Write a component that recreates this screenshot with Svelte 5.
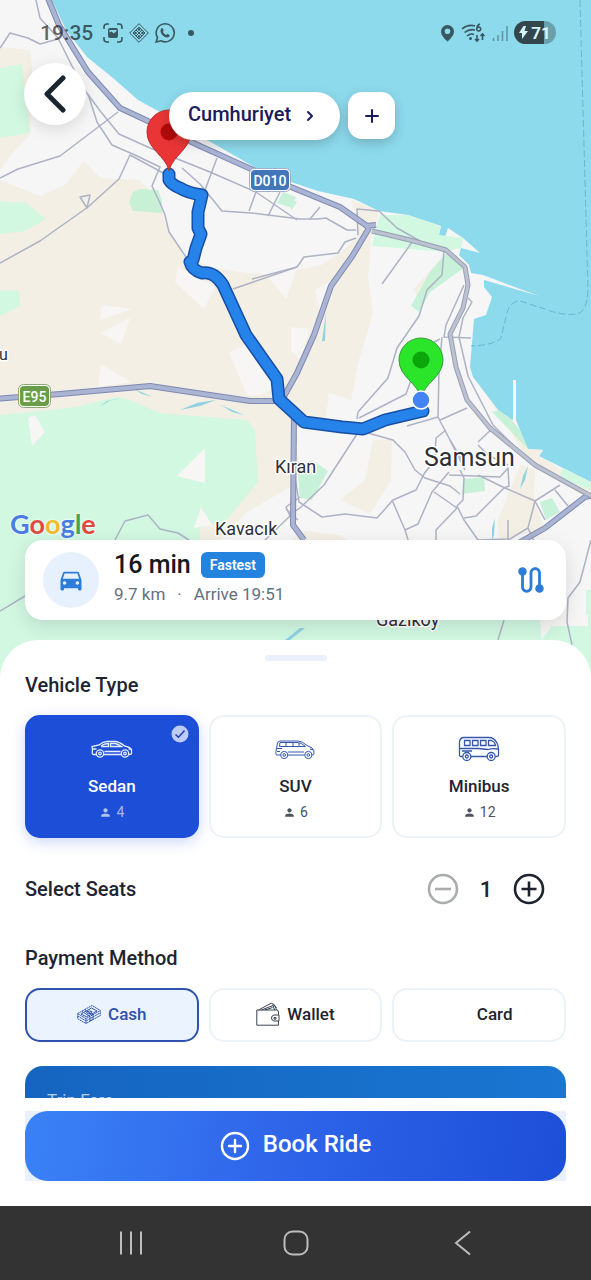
<script>
  const vehicles = [
    { id: 'sedan', name: 'Sedan', seats: 4 },
    { id: 'suv', name: 'SUV', seats: 6 },
    { id: 'minibus', name: 'Minibus', seats: 12 }
  ];
  const payments = [
    { id: 'cash', name: 'Cash' },
    { id: 'wallet', name: 'Wallet' },
    { id: 'card', name: 'Card' }
  ];

  let vehicle = $state('sedan');
  let payment = $state('cash');
  let seats = $state(1);
  let maxSeats = $derived(vehicles.find((v) => v.id === vehicle).seats);

  const route =
    'M169 174L169 180Q172 185 180 188Q188 193 202 195L198 212V228L201 234L196 248L193 260L190 262Q192 270 202 273Q214 271 223 285L246 335L277 379L279 399L304 422L342 427L363 429L385 420L423 411';

  const highways = [
    'M47 -4L59 25L88 72L120 108L150 122L200 146L291 187L340 207L367 226L376 225',
    'M369 228L353 255L331 286L314 335L297 373L282 400',
    'M-5 399L60 394L150 386L250 401H276',
    'M294 412L293 525L304 540',
    'M515 545L545 528L585 497L595 495'
  ];

  const minorRoads = [
    'M36 0 L40 18 L58 38 L72 66 L86 92 L101 112 L119 134 L150 148 L175 158 L210 172 L256 192 L297 220',
    'M0 48 L10 33 L28 38 L40 44 L58 39',
    'M0 178 L18 169 L60 156 L118 112',
    'M0 263 L40 241 L88 207 L119 179 L130 155 L165 174 L180 183',
    'M80 197 L90 195 L87 208 Z',
    'M88 94 L97 122 L112 145 L135 155 L160 167 L157 174 L152 186 L160 203 L165 215 L169 232 L186 257',
    'M182 168 L200 184 L222 211 L251 213 L300 219 L318 219 L326 218 L347 230 L356 230',
    'M217 158 L205 190',
    'M256 192 L249 211 M280 192 L268 216',
    'M310 219 L320 207 M358 235 L357 209 L379 211 L397 228 L420 241',
    'M356 238 L345 242 L338 253 L304 257 L297 267 L233 289',
    'M297 267 L252 279 M413 241 L382 284',
    'M444 250 L442 275 L427 290 L419 316 L397 348 L388 378 L358 412 L357 419',
    'M464 285 L446 325 L444 337 L471 338',
    'M468 298 L472 302 L463 318 L459 337 L468 376 L493 425 L530 462',
    'M442 337 L439 370 L438 417 L450 440 L465 470',
    'M434 342 L440 339 M438 417 L407 426',
    'M359 418 L406 394 L411 380',
    'M440 420 L467 408',
    'M357 430 L393 440 L405 452 L415 470 L425 478 L450 486 L460 494',
    'M357 434 L324 485 L301 507 L293 513',
    'M296 437 L293 465 L299 502 L322 517 L345 514 L377 518 L393 500 L416 490 L424 474 L430 466',
    'M446 430 L436 438 L435 455 M450 440 L462 460',
    'M392 500 L405 530 L409 543 L405 530 L418 524 L432 492 L449 472',
    'M460 470 L464 478 L463 500 L457 506 L464 520 L478 540 L508 539 L508 520',
    'M434 492 L457 508 L436 530 L436 544',
    'M449 475 L500 477 L508 468 L509 486 L504 488 L476 516 L464 518',
    'M478 442 L493 428 M478 445 L488 455 L508 465 M478 475 L505 488 L535 501 L560 485',
    'M535 501 L528 528 L508 540 M535 501 L545 520 M528 528 L535 543 M555 490 L568 506',
    'M591 540 L580 582 L568 598 L567 622 L572 645',
    'M115 540 L125 521 L148 515 L160 529 L178 533 L192 542',
    'M0 611 L30 593 M504 620 L498 640',
    'M300 497 L286 507 L290 516 L265 540',
    'M444 541 L437 570 M286 509 L298 520'
  ];
</script>

{#snippet person()}
  <svg class="person" viewBox="0 0 24 24" aria-hidden="true">
    <path d="M12 12c2.21 0 4-1.79 4-4s-1.79-4-4-4-4 1.79-4 4 1.79 4 4 4zm0 2c-2.67 0-8 1.34-8 4v2h16v-2c0-2.66-5.33-4-8-4z" />
  </svg>
{/snippet}

{#snippet vehicleIcon(id)}
  <svg class="vehicle-icon" viewBox="0 0 42 28" aria-hidden="true">
    {#if id === 'sedan'}
      <path d="M5 19.500H2.500Q1 19.500 1.300 17.500L1.500 14L1 11.500L8 10Q12 6.500 16 6.500H24Q28 6.500 33.500 11Q39 12 40.500 14.500V18.500Q40.500 19.500 38 19.500M30 19.500H13" />
      <path d="M10 11Q13 8.500 17.500 8.500V11.500H10M19.500 8.500H24Q27 9 30.500 11.500H19.500ZM2 14H5.500M37.500 14H40M13.500 16.500H29.500" />
      <circle cx="9" cy="18.500" r="3.700" /><circle cx="9" cy="18.500" r="1.300" />
      <circle cx="34" cy="18.500" r="3.700" /><circle cx="34" cy="18.500" r="1.300" />
    {:else if id === 'suv'}
      <path d="M6.500 20H2.500Q1.500 19 2 16.500L3.500 8Q4 6.500 6 6H24Q28 6 33 10.500L38 13Q40.500 15 40 19Q39.500 20 38 20M30.500 20H14" />
      <path d="M6 7.500H24.500Q27.500 8 31.500 11.500H5.500ZM12 7.500V11.500M19 7.500V11.500M25 8V11.500M2.500 13.500H8M36 14L39.500 15M3 16.500H6M14 17H30" />
      <circle cx="10.200" cy="20" r="3.600" /><circle cx="10.200" cy="20" r="1.300" />
      <circle cx="34.300" cy="20" r="3.600" /><circle cx="34.300" cy="20" r="1.300" />
    {:else}
      <g stroke-width="1.300">
        <path d="M4.500 21.500H2.500Q1.500 21.500 1.500 20V7Q2 2.500 6 2.500H31Q36 2.500 39 8Q40.500 11 40.500 15V20Q40.500 21.500 38 21.500M29 21.500H13" />
        <path d="M6.500 5.500H12V10.500H6.500ZM14.500 5.500H20V10.500H14.500ZM22.500 5.500H28V10.500H22.500ZM30.500 5.500H33.500Q37 7 37.500 10.500H30.500ZM2 13.500H20L30 14.500Q35 13 40 14M4 16H14" />
        <circle cx="8.800" cy="21.500" r="4" /><circle cx="8.800" cy="21.500" r="1.500" />
        <circle cx="33.200" cy="21.500" r="4" /><circle cx="33.200" cy="21.500" r="1.500" />
      </g>
    {/if}
  </svg>
{/snippet}

{#snippet paymentIcon(id)}
  <svg class="payment-icon" viewBox="0 0 24 24" aria-hidden="true">
    {#if id === 'cash'}
      <path d="M.7 11.500L15 3.500L23.300 8.500L9 16.700ZM.7 11.500V16.700L9 21.500L23.300 13.500V8.500M9 16.700V21.500M1 14L9 19L23 11" stroke-dasharray="2 .5" />
      <path d="M4 12L14.500 6L20 9L9.500 14.800ZM7.500 7.700L16 12.800V17.500L13 19V14.500L5 9.500M9.500 10.500Q12 8 15 9.500Q14.500 12 11 11.800Z" />
    {:else if id === 'wallet'}
      <path d="M.8 8H20.500Q22.500 8 22.500 10V13M22.500 19V23.200H.8V8M22.800 13H18Q15.500 13.500 15.500 16Q15.500 18.500 18 19H23V13M18 15.500H20V17.200H18Z" />
      <path d="M2.500 8L15.500 1L19.500 5L20.500 8M5.500 8L17 3.500L18.500 8M9 8L16.500 5.500M17 1.500L20.500 6" />
    {/if}
  </svg>
{/snippet}

<main class="app">
  <svg class="map" viewBox="0 0 591 690" preserveAspectRatio="xMidYMin slice" role="img" aria-label="Route map from Samsun to Cumhuriyet">
    <rect width="591" height="690" fill="#8ddaed" />
    <path fill="#f6f6f7" d="M0 0H52L66 30L87 57L113 78L138 100L160 112L200 136L230 153L256 168L291 182L318 191L354 199L379 211L408 215L441 226L439 235L445 237L448 228L463 238L480 253L461 248L459 255L469 265L471 273L483 275L539 296L484 280V287L492 297L486 315L474 319L470 367L473 377L498 410L511 419L513 420V380H516V420L520 430L528 449L543 450L539 456L591 482V690H0Z" />
    <g fill="#f4efe4">
      <path d="M0 47L30 50L32 67L30 135L15 150L0 170Z" />
      <path d="M0 180L40 196L66 184L84 161L100 178L140 180L160 205L165 222L183 255L213 268L247 273L273 275L297 270L321 265L341 252L356 238L357 209L371 212V243L368 278L373 313L359 360L351 400L329 393L326 417L295 430L300 470L290 487L247 512L215 545H0Z" />
      <path d="M352 200L379 211L373 235L359 232ZM373 440L392 439L391 480L370 514L340 500L365 480ZM291 540L305 531L340 535L355 545H291ZM528 449L543 450L539 456L591 488V500L555 480L530 463L500 415L475 380ZM520 465L535 470L534 500L545 530L520 535L500 540L497 522ZM413 290L435 265L444 258V270L420 298Z" />
    </g>
    <path fill="#d2f8e2" d="M0 415L50 410L75 407L117 397L130 400L160 413L247 420L255 430L258 482L227 520L200 528V600H540V625H591V690H0ZM0 203L25 202L46 219L25 231L0 234ZM0 290L19 291L20 306L0 316ZM0 68L22 64L30 133L0 138ZM0 201L20 203L42 218L0 231ZM380 215L408 215L441 226L439 235L463 238L461 248L445 252L372 246L375 233ZM562 468L591 482V490L560 478ZM586 590H591V640H586Z" />
    <path fill="#bdf0d1" d="M133 192L140 189L158 190L162 200V213L133 211L129 203ZM283 192L296 197L292 208L277 203ZM291 198L297 202L291 211ZM411 306L430 272L446 253L464 268L430 292L419 312ZM463 479L484 477L485 491L462 494ZM540 502L552 498L560 512L546 520ZM297 465L312 460L328 471L312 500L300 498ZM492 412L498 410L511 419L520 430L528 449Z" opacity=".8" />
    <g fill="#f7f6f5">
      <path d="M102 305L132 309L100 320ZM130 318L121 344L100 333ZM101 364L131 382L110 385L98 387ZM178 267L215 287L204 309L175 282ZM267 276L297 268L286 299ZM229 353L246 344L280 385L260 395H247ZM205 448L177 476L205 483ZM35 415L45 432L32 446L28 418ZM201 507L212 525L194 528ZM291 327L310 329L300 360L291 350ZM315 290L332 280V300L320 312ZM325 448L350 440L369 470L335 473L315 455Z" />
      <path d="M541 615H588V626H552L541 640Z" />
    </g>
    <path fill="#8fd3e2" d="M122 398L109 401L99 407L107 401ZM134 389L153 397L142 394ZM180 410L197 403L216 400L200 406ZM221 405L244 415L232 412ZM326 313L325 341L322 341ZM528 466L525 480L520 489L523 476ZM495 518L494 535L492 540L492 528ZM285 640L300 628L305 628L290 640Z" />
    <path fill="none" stroke="#66b7d0" stroke-width="1" stroke-dasharray="7 3" d="M580 0L588 290Q587 312 577 314Q562 316 545 309L520 301Q509 301 506 317L501 338Q495 345 471 346" />

    <g fill="none" stroke="#adb3c5" stroke-width="1.500" stroke-linejoin="round">
      {#each minorRoads as d}
        <path {d} />
      {/each}
    </g>

    <g fill="none" stroke-linejoin="round">
      <g stroke="#7c89b3" stroke-width="6">
        {#each highways as d}
          <path {d} />
        {/each}
      </g>
      <g stroke="#abb5d3" stroke-width="4">
        {#each highways as d}
          <path {d} />
        {/each}
      </g>
      <path stroke="#989fb3" stroke-width="5" d="M372 231L410 240L446 250L465 267L468 285L463 308L450 334L456 367L467 400L490 428L535 465L591 496" />
      <path stroke="#bcc2d1" stroke-width="3" d="M372 231L410 240L446 250L465 267L468 285L463 308L450 334L456 367L467 400L490 428L535 465L591 496" />
      <g stroke-linecap="round">
        <path stroke="#174ea6" stroke-width="13" d={route} />
        <path stroke="#2583ea" stroke-width="10" d={route} />
      </g>
    </g>

    <path fill="#e93535" stroke="#b92f2f" d="M169 171C166 156 147 149 147 132A22 22 0 0 1 191 132C191 149 172 156 169 171Z" />
    <circle cx="169" cy="132" r="8.500" fill="#b30a0a" />
    <path fill="#2be52b" stroke="#3a9b3a" d="M421 398C418 383 399 377 399 360A22 22 0 0 1 443 360C443 377 424 383 421 398Z" />
    <circle cx="421" cy="360" r="8.500" fill="#0aa60a" />
    <circle cx="421" cy="400" r="9" fill="#4385f5" stroke="#fff" stroke-width="1.500" />

    <g text-anchor="middle" font-size="14" font-weight="500" fill="#fff">
      <rect x="249.500" y="168.500" width="41" height="23" rx="5" fill="#fff" stroke="#a2b1ca" />
      <rect x="251" y="170" width="38" height="20" rx="4" fill="#4376b9" />
      <text x="270" y="186">D010</text>
      <rect x="18.500" y="384.500" width="32" height="23" rx="5" fill="#fff" stroke="#88aa70" />
      <rect x="20" y="386" width="29" height="20" rx="4" fill="#699d47" />
      <text x="34.500" y="402">E95</text>
    </g>
    <g class="places" fill="#2e3135">
      <text x="-1" y="360" font-size="16">u</text>
      <text x="275" y="473" font-size="18">Kıran</text>
      <text x="215" y="535" font-size="18">Kavacık</text>
      <text x="424" y="466" font-size="25">Samsun</text>
      <text x="376" y="626" font-size="18">Gazıköy</text>
    </g>
  </svg>

  <section class="stage">
    <header class="status">
      <span class="clock">19:35</span>
      <svg width="20" height="20" viewBox="0 0 20 20" aria-hidden="true">
        <path class="line" d="M1 6V4Q1 1 4 1H6M14 1H16Q19 1 19 4V6M19 14V16Q19 19 16 19H14M6 19H4Q1 19 1 16V14" />
        <path fill-rule="evenodd" d="M7 5H13Q15 5 15 7V13Q15 15 13 15H7Q5 15 5 13V7Q5 5 7 5ZM6.500 7V9.500L8.500 8.500L11 10.500L13.500 8V7Z" />
      </svg>
      <svg width="20" height="20" viewBox="0 0 20 20" aria-hidden="true">
        <path class="line thin" d="M10 .7L19.300 10L10 19.300L.7 10ZM10 4L16 10L10 16L4 10ZM7 7L13 13M13 7L7 13" />
        <circle cx="10" cy="6.500" r="1.300" /><circle cx="6.500" cy="10" r="1.300" /><circle cx="13.500" cy="10" r="1.300" /><circle cx="10" cy="13.500" r="1.300" />
      </svg>
      <svg width="20" height="20" viewBox="0 0 20 20" aria-hidden="true">
        <path class="line" d="M1.200 19L2.500 14.500A9 9 0 1 1 6 17.800Z" />
        <path d="M6.200 5.500Q7.300 4.500 8 5.700L8.700 7.500L7.900 8.900Q9 11 11.200 12L12.400 10.900L14.700 12Q14.800 14 12.600 14.600Q10 14.800 7.500 12.200Q4.300 8.700 6.200 5.500Z" />
      </svg>
      <svg width="20" height="20" viewBox="0 0 20 20" aria-hidden="true"><circle cx="10" cy="10" r="3" /></svg>
      <span class="spacer"></span>
      <svg width="15" height="18" viewBox="0 0 15 18" aria-hidden="true">
        <path fill-rule="evenodd" d="M7.500 1A6.500 6.500 0 0 1 14 7.500Q14 12 7.500 17.500Q1 12 1 7.500A6.500 6.500 0 0 1 7.500 1ZM7.500 4.500A2.800 2.800 0 1 0 7.500 10.100A2.800 2.800 0 1 0 7.500 4.500Z" />
      </svg>
      <svg width="25" height="20" viewBox="0 0 25 20" aria-hidden="true">
        <path class="line" d="M1 6Q7 1 14 3M3.500 9.500Q8.500 5.500 14 7M6 13Q9.500 10 13 11.500" />
        <circle cx="9.500" cy="15.500" r="1.500" />
        <path class="line" d="M19 1Q16 2 16 5A2 2 0 1 0 18 4Q17 4 16 5M16 12V18M14 16L16 18L18 16M21.500 17V11M19.500 13L21.500 11L23.500 13" />
      </svg>
      <svg class="faint" width="16" height="18" viewBox="0 0 16 18" aria-hidden="true">
        <path class="line" d="M1.500 14V17M6 11V17M10.500 7V17M15 2V17" />
      </svg>
      <span class="battery">
        <svg width="9" height="13" viewBox="0 0 9 13" aria-hidden="true"><path d="M4.500 0L0 7H3L3 13L9 5H5.500L7 0Z" /></svg>71
      </span>
    </header>

    <div class="top-row">
      <button class="back" aria-label="Back">
        <svg width="24" height="38" viewBox="0 0 24 38" aria-hidden="true"><path d="M20 3L4 19L20 35" /></svg>
      </button>
      <button class="destination">
        Cumhuriyet
        <svg width="10" height="14" viewBox="0 0 10 14" aria-hidden="true"><path d="M3 3L7 7L3 11" /></svg>
      </button>
      <button class="add" aria-label="Add stop">
        <svg width="16" height="16" viewBox="0 0 16 16" aria-hidden="true"><path d="M8 2V14M2 8H14" /></svg>
      </button>
    </div>

    <div class="trip-area">
      <span class="google"><i class="b">G</i><i class="r">o</i><i class="y">o</i><i class="b">g</i><i class="g">l</i><i class="r">e</i></span>
      <article class="trip">
        <span class="car">
          <svg width="28" height="28" viewBox="0 0 24 24" aria-hidden="true">
            <path d="M18.920 6.010C18.720 5.420 18.160 5 17.500 5h-11c-.66 0-1.210.42-1.420 1.010L3 12v8c0 .55.45 1 1 1h1c.55 0 1-.45 1-1v-1h12v1c0 .55.45 1 1 1h1c.55 0 1-.45 1-1v-8l-2.080-5.990zM6.500 16c-.83 0-1.500-.67-1.500-1.500S5.670 13 6.500 13s1.500.67 1.500 1.500S7.330 16 6.500 16zm11 0c-.83 0-1.500-.67-1.500-1.500s.67-1.500 1.500-1.500 1.500.67 1.500 1.500-.67 1.500-1.500 1.500zM5 11l1.500-4.500h11L19 11H5z" />
          </svg>
        </span>
        <div class="trip-text">
          <div class="trip-head"><strong>16 min</strong><span class="badge">Fastest</span></div>
          <div class="trip-sub"><span>9.7 km</span><span>·</span><span>Arrive 19:51</span></div>
        </div>
        <svg class="route" width="34" height="34" viewBox="0 0 24 24" aria-hidden="true">
          <path d="M19 15.180V7c0-2.210-1.790-4-4-4s-4 1.790-4 4v10c0 1.100-.9 2-2 2s-2-.9-2-2V8.820C8.160 8.400 9 7.300 9 6c0-1.660-1.340-3-3-3S3 4.340 3 6c0 1.300.84 2.400 2 2.820V17c0 2.210 1.790 4 4 4s4-1.790 4-4V7c0-1.100.9-2 2-2s2 .9 2 2v8.180c-1.160.41-2 1.510-2 2.820 0 1.660 1.340 3 3 3s3-1.340 3-3c0-1.300-.84-2.400-2-2.820z" />
        </svg>
      </article>
    </div>
  </section>

  <section class="sheet">
    <span class="handle"></span>

    <h2 id="vehicle-title">Vehicle Type</h2>
    <div class="options vehicles" role="radiogroup" aria-labelledby="vehicle-title">
      {#each vehicles as v}
        <label class="vehicle" class:selected={vehicle === v.id}>
          <input type="radio" name="vehicle" value={v.id} bind:group={vehicle} />
          {#if vehicle === v.id}
            <svg class="check" viewBox="0 0 18 18" aria-hidden="true">
              <circle cx="9" cy="9" r="8.500" /><path d="M4.500 9.500L7.500 12.200L13.500 5.500" />
            </svg>
          {/if}
          {@render vehicleIcon(v.id)}
          <span class="name">{v.name}</span>
          <span class="capacity">{@render person()}{v.seats}</span>
        </label>
      {/each}
    </div>

    <div class="seats">
      <h2>Select Seats</h2>
      <div class="stepper">
        <button aria-label="Fewer seats" disabled={seats <= 1} onclick={() => seats--}>
          <svg viewBox="0 0 32 32" aria-hidden="true"><circle cx="16" cy="16" r="14" /><path d="M8 16H24" /></svg>
        </button>
        <output>{seats}</output>
        <button aria-label="More seats" disabled={seats >= maxSeats} onclick={() => seats++}>
          <svg viewBox="0 0 32 32" aria-hidden="true"><circle cx="16" cy="16" r="14" /><path d="M8.500 16H23.500M16 8.500V23.500" /></svg>
        </button>
      </div>
    </div>

    <h2 id="payment-title">Payment Method</h2>
    <div class="options payments" role="radiogroup" aria-labelledby="payment-title">
      {#each payments as p}
        <label class="payment" class:selected={payment === p.id}>
          <input type="radio" name="payment" value={p.id} bind:group={payment} />
          {@render paymentIcon(p.id)}
          {p.name}
        </label>
      {/each}
    </div>

    <div class="fare-clip"><div class="fare">Trip Fare</div></div>

    <div class="book-wrap">
      <button class="book">
        <svg width="30" height="30" viewBox="0 0 30 30" aria-hidden="true"><circle cx="15" cy="15" r="13" /><path d="M9 15H21M15 9V21" /></svg>
        Book Ride
      </button>
    </div>
  </section>

  <nav class="system">
    <button aria-label="Recent apps"><svg viewBox="0 0 28 28" aria-hidden="true"><path d="M4 2.500V25.500M14 2.500V25.500M24 2.500V25.500" /></svg></button>
    <button aria-label="Home"><svg viewBox="0 0 28 28" aria-hidden="true"><rect x="2.500" y="2.500" width="23" height="23" rx="8" /></svg></button>
    <button aria-label="Go back"><svg viewBox="0 0 28 28" aria-hidden="true"><path d="M24 2.500L10 14L24 25.500" /></svg></button>
  </nav>
</main>

<style>
  :global(body) {
    margin: 0;
  }
  .app {
    position: relative;
    display: flex;
    flex-direction: column;
    min-height: 100vh;
    overflow: hidden;
    background: #fff;
    font-family: Roboto, 'Noto Sans', sans-serif;
    color: #1e2430;
  }
  .app :global(*) {
    box-sizing: border-box;
  }
  button {
    padding: 0;
    border: 0;
    background: none;
    font: inherit;
    color: inherit;
  }
  .map {
    position: absolute;
    inset: 0 0 auto;
    width: 100%;
    height: 690px;
  }
  .places text {
    paint-order: stroke;
    stroke: #fff;
    stroke-width: 3px;
    stroke-linejoin: round;
  }
  .stage {
    position: relative;
    flex: 1;
    display: flex;
    flex-direction: column;
    min-height: 480px;
    padding-bottom: 20px;
  }
  .status {
    display: flex;
    align-items: center;
    gap: 6px;
    padding: 20px 35px 0 40px;
    height: 45px;
    color: rgb(0 0 0 / 60%);
    fill: rgb(0 0 0 / 60%);
  }
  .clock {
    margin-right: 4px;
    font-size: 21px;
    font-weight: 500;
  }
  .spacer {
    flex: 1;
  }
  .line {
    fill: none;
    stroke: rgb(0 0 0 / 60%);
    stroke-width: 1.6;
  }
  .thin {
    stroke-width: 1;
  }
  .faint {
    opacity: 0.5;
  }
  .battery {
    display: flex;
    align-items: center;
    justify-content: center;
    gap: 3px;
    width: 42px;
    height: 23px;
    border-radius: 12px;
    background: linear-gradient(90deg, #33464b 71%, #69a0ad 71%);
    fill: #d5f3fa;
    color: #d5f3fa;
    font-size: 17px;
    font-weight: 700;
  }
  .top-row {
    display: flex;
    align-items: flex-start;
    padding: 18px 24px;
  }
  .top-row button {
    flex: none;
    display: flex;
    align-items: center;
    justify-content: center;
    background: #fff;
    box-shadow: 0 4px 12px rgb(0 0 0 / 20%);
  }
  .top-row path {
    fill: none;
    stroke: #1b1b5e;
    stroke-width: 2;
    stroke-linecap: round;
    stroke-linejoin: round;
  }
  .top-row .back {
    width: 62px;
    height: 62px;
    border-radius: 50%;
    box-shadow: 0 4px 16px rgb(0 0 0 / 12%);
  }
  .top-row .back path {
    stroke: #1a2530;
    stroke-width: 5;
  }
  .top-row .destination {
    gap: 14px;
    height: 48px;
    margin: 29px 0 0 83px;
    padding: 0 25px 4px 19px;
    border-radius: 24px;
    color: #1b1b5e;
    font-size: 20px;
    font-weight: 500;
    line-height: 24px;
  }
  .destination svg {
    margin-top: 4px;
  }
  .top-row .add {
    width: 47px;
    height: 47px;
    margin: 29px 0 0 8px;
    border-radius: 14px;
  }
  .trip-area {
    display: flex;
    flex-direction: column;
    margin-top: auto;
    padding: 0 25px;
  }
  .google {
    margin-left: -15px;
    font-family: Lato, sans-serif;
    font-size: 27px;
    font-weight: 700;
    line-height: 32px;
    text-shadow: 0 0 2px #fff, 0 0 2px #fff;
  }
  .google i {
    font-style: normal;
  }
  .b { color: #4a7de0; }
  .r { color: #df4a3e; }
  .y { color: #f1b92d; }
  .g { color: #3ea757; }
  .trip {
    display: flex;
    align-items: center;
    height: 80px;
    padding: 0 18px;
    border-radius: 18px;
    background: #fff;
    box-shadow: 0 6px 20px rgb(0 0 0 / 12%);
  }
  .car {
    display: flex;
    align-items: center;
    justify-content: center;
    width: 56px;
    height: 56px;
    border-radius: 50%;
    background: #e7f1fd;
    fill: #2d7cd8;
  }
  .trip-text {
    flex: 1;
    margin-left: 15px;
    padding-bottom: 4px;
  }
  .trip-head {
    display: flex;
    align-items: center;
    gap: 10px;
  }
  .trip-head strong {
    font-size: 25px;
    font-weight: 500;
    line-height: 32px;
    color: #15181d;
  }
  .badge {
    padding: 0 9px;
    border-radius: 6px;
    background: #2583e0;
    color: #fff;
    font-size: 14px;
    font-weight: 600;
    line-height: 26px;
  }
  .trip-sub {
    display: flex;
    gap: 12px;
    color: #65707e;
    font-size: 17px;
    line-height: 26px;
  }
  .route {
    fill: #2d7cd8;
  }
  .sheet {
    position: relative;
    display: flex;
    flex-direction: column;
    padding: 15px 25px 25px;
    border-radius: 38px 38px 0 0;
    background: #fff;
  }
  .handle {
    align-self: center;
    width: 62px;
    height: 6px;
    border-radius: 3px;
    background: #ebf0fc;
  }
  h2 {
    margin: 0;
    font-size: 20px;
    font-weight: 500;
    line-height: 24px;
  }
  .sheet > h2:first-of-type {
    margin-top: 12px;
  }
  .options {
    display: grid;
    grid-template-columns: repeat(3, 1fr);
    gap: 10px;
    margin-top: 18px;
  }
  .options label {
    position: relative;
    display: flex;
    align-items: center;
    border: 2px solid #ebf2f8;
    border-radius: 15px;
    background: #fff;
    font-size: 17px;
    font-weight: 500;
    line-height: 24px;
  }
  .options input {
    position: absolute;
    opacity: 0;
  }
  .options svg {
    fill: none;
    stroke: #3456ad;
  }
  .vehicle {
    flex-direction: column;
    height: 123px;
    padding-top: 18px;
  }
  .options .vehicle.selected {
    border-color: #1d4ed8;
    background: #1d4ed8;
    box-shadow: 0 4px 14px rgb(29 78 216 / 22%);
    color: #fff;
  }
  .vehicle-icon {
    width: 42px;
    height: 28px;
  }
  .options .vehicle.selected .vehicle-icon {
    stroke: #e5edff;
    stroke-width: 1.3;
  }
  .name {
    margin-top: 11px;
  }
  .capacity {
    display: flex;
    align-items: center;
    gap: 4px;
    margin-top: 2px;
    color: #4b5260;
    font-size: 14px;
    font-weight: 400;
  }
  .options .person {
    width: 13px;
    height: 13px;
    fill: #4b5260;
    stroke: none;
  }
  .selected .capacity {
    color: #a5b8ef;
  }
  .options .selected .person {
    fill: #b4c4f3;
  }
  .check {
    position: absolute;
    top: 8px;
    right: 8px;
    width: 18px;
    height: 18px;
  }
  .check circle {
    fill: #bccbf7;
    stroke: none;
  }
  .check path {
    stroke: #1d3fae;
    stroke-width: 1.5;
  }
  .seats {
    display: flex;
    align-items: center;
    justify-content: space-between;
    margin: 34px 21px 40px 0;
  }
  .stepper {
    display: flex;
    align-items: center;
    gap: 20px;
    font-size: 22px;
    font-weight: 500;
  }
  .stepper button {
    display: flex;
    width: 32px;
    height: 34px;
    align-items: center;
    fill: none;
    stroke: #1b232e;
    stroke-width: 2.6;
  }
  .stepper button:disabled {
    stroke: #a9abad;
  }
  .stepper output {
    width: 14px;
    text-align: center;
  }
  .payment {
    justify-content: center;
    gap: 7px;
    height: 54px;
    padding-bottom: 2px;
  }
  .options .payment.selected {
    border-color: #2f52ae;
    background: #ebf3fe;
    color: #2f52ae;
  }
  .payment-icon {
    width: 24px;
    height: 24px;
  }
  .options .payment:not(.selected) .payment-icon {
    stroke: #3b4452;
  }
  .fare-clip {
    height: 32px;
    margin-top: 24px;
    overflow: hidden;
  }
  .fare {
    padding: 22px;
    border-radius: 18px;
    background: linear-gradient(90deg, #1565c0, #1976d2);
    color: rgb(255 255 255 / 70%);
    font-size: 17px;
    line-height: 24px;
  }
  .book-wrap {
    margin-top: 13px;
    background: #eaf1fe;
  }
  .book {
    display: flex;
    align-items: center;
    justify-content: center;
    gap: 13px;
    width: 100%;
    height: 70px;
    padding-bottom: 4px;
    border-radius: 23px;
    background: linear-gradient(100deg, #3b82f6, #2f66ea 45%, #1d4ed8);
    color: #fff;
    font-size: 24px;
    font-weight: 500;
  }
  .book svg {
    margin-top: 4px;
    fill: none;
    stroke: #fff;
    stroke-width: 2.4;
    stroke-linecap: round;
  }
  .system {
    position: relative;
    display: flex;
    align-items: center;
    justify-content: space-between;
    height: 74px;
    padding: 0 115px;
    background: #333;
  }
  .system button {
    display: flex;
    width: 32px;
    height: 32px;
    align-items: center;
    justify-content: center;
  }
  .system svg {
    width: 28px;
    height: 28px;
    fill: none;
    stroke: #bdbdbd;
    stroke-width: 2;
  }
</style>
